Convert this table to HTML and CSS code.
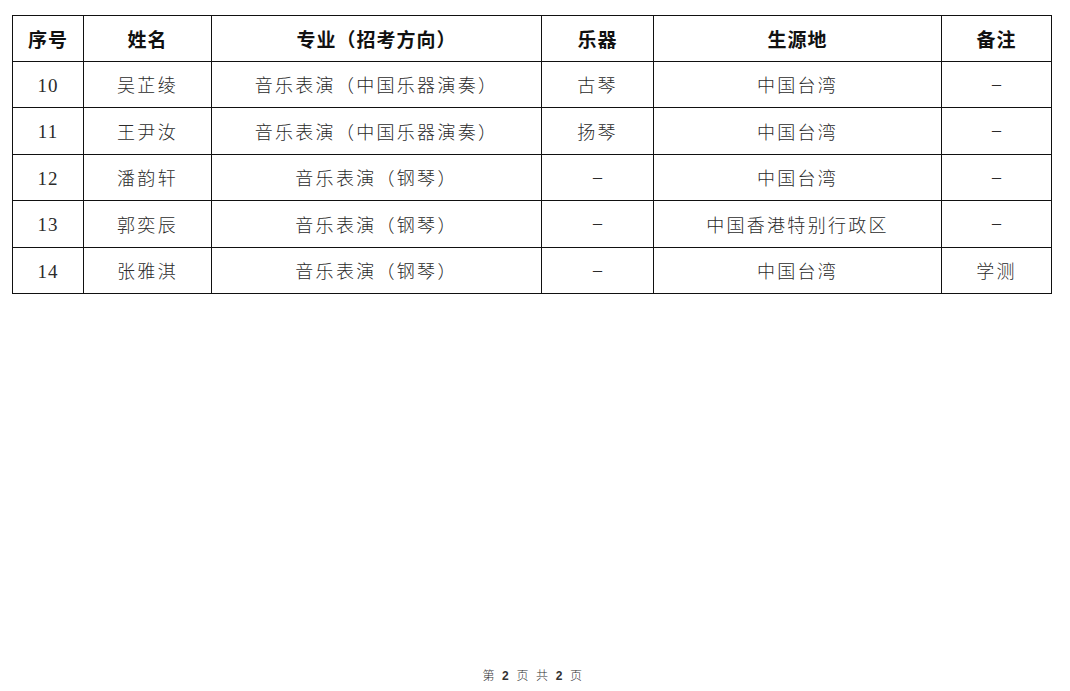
FILE: index.html
```html
<!DOCTYPE html>
<html lang="zh-CN">
<head>
<meta charset="utf-8">
<link rel="stylesheet" href="styles.css">
</head>
<body>
<div class="page">
  <table class="roster">
    <colgroup>
      <col class="c-no">
      <col class="c-name">
      <col class="c-major">
      <col class="c-inst">
      <col class="c-origin">
      <col class="c-note">
    </colgroup>
    <thead>
      <tr class="head-row">
        <th>序号</th>
        <th>姓名</th>
        <th>专业（招考方向）</th>
        <th>乐器</th>
        <th>生源地</th>
        <th>备注</th>
      </tr>
    </thead>
    <tbody>
      <tr class="r-a">
        <td class="num">10</td>
        <td>吴芷绫</td>
        <td>音乐表演（中国乐器演奏）</td>
        <td>古琴</td>
        <td>中国台湾</td>
        <td class="dash">–</td>
      </tr>
      <tr class="r-b">
        <td class="num">11</td>
        <td>王尹汝</td>
        <td>音乐表演（中国乐器演奏）</td>
        <td>扬琴</td>
        <td>中国台湾</td>
        <td class="dash">–</td>
      </tr>
      <tr class="r-a">
        <td class="num">12</td>
        <td>潘韵轩</td>
        <td>音乐表演（钢琴）</td>
        <td class="dash">–</td>
        <td>中国台湾</td>
        <td class="dash">–</td>
      </tr>
      <tr class="r-b">
        <td class="num">13</td>
        <td>郭奕辰</td>
        <td>音乐表演（钢琴）</td>
        <td class="dash">–</td>
        <td>中国香港特别行政区</td>
        <td class="dash">–</td>
      </tr>
      <tr class="r-a">
        <td class="num">14</td>
        <td>张雅淇</td>
        <td>音乐表演（钢琴）</td>
        <td class="dash">–</td>
        <td>中国台湾</td>
        <td>学测</td>
      </tr>
    </tbody>
  </table>
  <div class="footer">第 <b>2</b> 页 共 <b>2</b> 页</div>
</div>
</body>
</html>
```
FILE: styles.css
```css
html, body {
  margin: 0;
  padding: 0;
  background: #ffffff;
}

.page {
  width: 1070px;
  height: 691px;
  box-sizing: border-box;
  padding: 15px 0 0 12px;
  display: flex;
  flex-direction: column;
}

.roster {
  width: 1039px;
  table-layout: fixed;
  border-collapse: collapse;
  font-family: "Liberation Serif", "Noto Sans CJK SC", serif;
  color: #2b2b2b;
}

.c-no { width: 71px; }
.c-name { width: 128px; }
.c-major { width: 330px; }
.c-inst { width: 112px; }
.c-origin { width: 288px; }
.c-note { width: 110px; }

.roster th,
.roster td {
  border: 1px solid #111111;
  text-align: center;
  vertical-align: middle;
  padding: 0;
}

.roster th {
  font-family: "Noto Sans CJK SC", sans-serif;
  font-weight: 700;
  font-size: 19px;
  color: #111111;
  letter-spacing: 1px;
}

.head-row { height: 46px; }
.r-a { height: 46px; }
.r-b { height: 47px; }

.roster td {
  font-size: 18px;
  font-weight: 300;
  letter-spacing: 2.3px;
  padding-bottom: 1px;
}

.roster td.num {
  font-family: "Liberation Serif", serif;
  font-weight: 400;
  font-size: 19px;
  letter-spacing: 1px;
  padding-bottom: 0;
  padding-top: 2px;
}

.roster td.dash {
  font-family: "Liberation Serif", serif;
  font-weight: 400;
  letter-spacing: 0;
}

.footer {
  margin-top: auto;
  margin-bottom: 8px;
  margin-left: -12px;
  padding-right: 4px;
  text-align: center;
  font-family: "Noto Sans CJK SC", sans-serif;
  font-size: 12px;
  font-weight: 300;
  color: #333333;
  letter-spacing: 1.5px;
  word-spacing: 2px;
}

.footer b {
  font-family: "Liberation Sans", sans-serif;
  font-weight: 700;
}
```
